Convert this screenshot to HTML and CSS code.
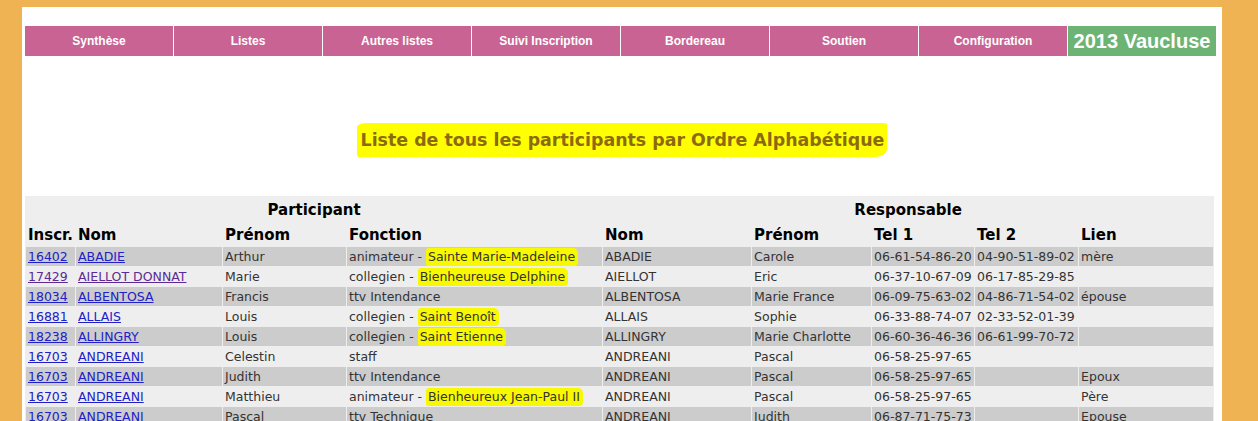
FILE: index.html
```html
<!DOCTYPE html>
<html lang="fr">
<head>
<meta charset="utf-8">
<title>Liste des participants</title>
<link rel="stylesheet" href="styles.css">
</head>
<body>
<div class="page">
  <nav class="menu">
    <a class="menu-item" href="#">Synthèse</a>
    <a class="menu-item" href="#">Listes</a>
    <a class="menu-item" href="#">Autres listes</a>
    <a class="menu-item" href="#">Suivi Inscription</a>
    <a class="menu-item" href="#">Bordereau</a>
    <a class="menu-item" href="#">Soutien</a>
    <a class="menu-item" href="#">Configuration</a>
    <div class="menu-brand">2013 Vaucluse</div>
  </nav>

  <h1 class="title"><span class="title-mark">Liste de tous les participants par Ordre Alphabétique</span></h1>

  <table class="list">
    <colgroup>
      <col class="w-inscr"><col class="w-nom"><col class="w-prenom"><col class="w-fonction">
      <col class="w-rnom"><col class="w-rprenom"><col class="w-tel1"><col class="w-tel2"><col class="w-lien">
    </colgroup>
    <thead>
      <tr class="group">
        <th colspan="4">Participant</th>
        <th colspan="5">Responsable</th>
      </tr>
      <tr class="cols">
        <th>Inscr.</th><th>Nom</th><th>Prénom</th><th>Fonction</th>
        <th>Nom</th><th>Prénom</th><th>Tel 1</th><th>Tel 2</th><th>Lien</th>
      </tr>
    </thead>
    <tbody>
      <tr class="dark">
        <td><a href="#">16402</a></td><td><a href="#">ABADIE</a></td><td>Arthur</td>
        <td>animateur - <span class="mark">Sainte Marie-Madeleine</span></td>
        <td>ABADIE</td><td>Carole</td><td>06-61-54-86-20</td><td>04-90-51-89-02</td><td>mère</td>
      </tr>
      <tr class="light">
        <td><a class="visited" href="#">17429</a></td><td><a class="visited" href="#">AIELLOT DONNAT</a></td><td>Marie</td>
        <td>collegien - <span class="mark">Bienheureuse Delphine</span></td>
        <td>AIELLOT</td><td>Eric</td><td>06-37-10-67-09</td><td>06-17-85-29-85</td><td></td>
      </tr>
      <tr class="dark">
        <td><a href="#">18034</a></td><td><a href="#">ALBENTOSA</a></td><td>Francis</td>
        <td>ttv Intendance</td>
        <td>ALBENTOSA</td><td>Marie France</td><td>06-09-75-63-02</td><td>04-86-71-54-02</td><td>épouse</td>
      </tr>
      <tr class="light">
        <td><a href="#">16881</a></td><td><a href="#">ALLAIS</a></td><td>Louis</td>
        <td>collegien - <span class="mark">Saint Benoît</span></td>
        <td>ALLAIS</td><td>Sophie</td><td>06-33-88-74-07</td><td>02-33-52-01-39</td><td></td>
      </tr>
      <tr class="dark">
        <td><a href="#">18238</a></td><td><a href="#">ALLINGRY</a></td><td>Louis</td>
        <td>collegien - <span class="mark">Saint Etienne</span></td>
        <td>ALLINGRY</td><td>Marie Charlotte</td><td>06-60-36-46-36</td><td>06-61-99-70-72</td><td></td>
      </tr>
      <tr class="light">
        <td><a href="#">16703</a></td><td><a href="#">ANDREANI</a></td><td>Celestin</td>
        <td>staff</td>
        <td>ANDREANI</td><td>Pascal</td><td>06-58-25-97-65</td><td></td><td></td>
      </tr>
      <tr class="dark">
        <td><a href="#">16703</a></td><td><a href="#">ANDREANI</a></td><td>Judith</td>
        <td>ttv Intendance</td>
        <td>ANDREANI</td><td>Pascal</td><td>06-58-25-97-65</td><td></td><td>Epoux</td>
      </tr>
      <tr class="light">
        <td><a href="#">16703</a></td><td><a href="#">ANDREANI</a></td><td>Matthieu</td>
        <td>animateur - <span class="mark">Bienheureux Jean-Paul II</span></td>
        <td>ANDREANI</td><td>Pascal</td><td>06-58-25-97-65</td><td></td><td>Père</td>
      </tr>
      <tr class="dark">
        <td><a href="#">16703</a></td><td><a href="#">ANDREANI</a></td><td>Pascal</td>
        <td>ttv Technique</td>
        <td>ANDREANI</td><td>Judith</td><td>06-87-71-75-73</td><td></td><td>Epouse</td>
      </tr>
    </tbody>
  </table>
</div>
</body>
</html>
```

FILE: styles.css
```css
html, body {
  margin: 0;
  padding: 0;
}
body {
  background: #f0b354;
  overflow: hidden;
}
.page {
  margin: 7px 0 0 22px;
  width: 1200px;
  min-height: 420px;
  background: #ffffff;
  padding: 19px 3px 0;
  box-sizing: border-box;
}
.menu {
  display: flex;
  gap: 1px;
  height: 30px;
}
.menu-item {
  width: 148px;
  flex: 0 0 148px;
  background: #c96393;
  color: #ffffff;
  font-family: "Liberation Sans", Arial, sans-serif;
  font-weight: bold;
  font-size: 12px;
  line-height: 30px;
  text-align: center;
  text-decoration: none;
}
.menu-brand {
  width: 148px;
  flex: 0 0 148px;
  background: #6db474;
  color: #ffffff;
  font-family: "Liberation Sans", Arial, sans-serif;
  font-weight: bold;
  font-size: 20px;
  line-height: 30px;
  text-align: center;
}
.title {
  margin: 74px 0 46px;
  text-align: center;
  font-family: "DejaVu Sans", Verdana, sans-serif;
  font-weight: bold;
  font-size: 17.4px;
  line-height: 20px;
  color: #8b6a12;
}
.title-mark {
  background: #ffff00;
  padding: 7px 3px 7px 4px;
  border-radius: 10px 3px 12px 2px / 4px 2px 8px 3px;
}
.list {
  width: 1189px;
  table-layout: fixed;
  border-collapse: separate;
  border-spacing: 1px;
  background: #eeeeee;
  font-family: "DejaVu Sans", Verdana, Tahoma, sans-serif;
  font-size: 12.5px;
  color: #333333;
}
.w-inscr { width: 49px; }
.w-nom { width: 146px; }
.w-prenom { width: 123px; }
.w-fonction { width: 255px; }
.w-rnom { width: 148px; }
.w-rprenom { width: 119px; }
.w-tel1 { width: 102px; }
.w-tel2 { width: 103px; }
.w-lien { width: 134px; }
.list th {
  font-weight: bold;
  font-size: 15px;
  color: #000000;
  height: 24px;
  padding: 2px 2px 0;
  line-height: 22px;
  text-align: left;
  white-space: nowrap;
  box-sizing: border-box;
}
.list .group th {
  text-align: center;
}
.list td {
  height: 19px;
  padding: 0 2px;
  line-height: 19px;
  white-space: nowrap;
  overflow: hidden;
}
.list tr.dark td {
  background: #cccccc;
}
.list tr.light td {
  background: #eeeeee;
}
.list a {
  color: #2020c8;
  text-decoration: underline;
}
.list a.visited {
  color: #5b2a95;
}
.mark {
  background: #f8f800;
  padding: 1px 3px 2px 2px;
  border-radius: 3px 5px 4px 2px;
}
```
